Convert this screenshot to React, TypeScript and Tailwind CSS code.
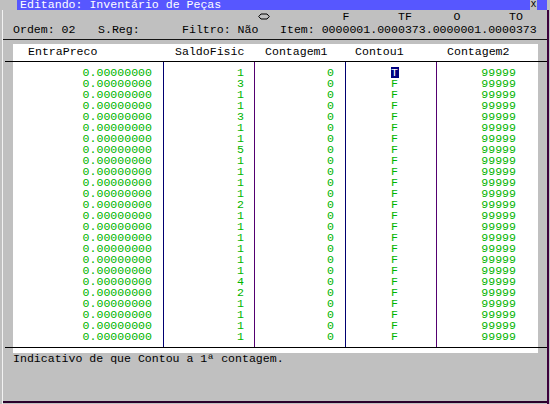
const saldo = [1, 3, 1, 1, 3, 1, 1, 5, 1, 1, 1, 1, 2, 1, 1, 1, 1, 1, 1, 4, 2, 1, 1, 1, 1];

const mono = "font-['Liberation_Mono',monospace] text-[11.57px] leading-[11px]";
const cell = "h-[11px] whitespace-pre";

function Column({ className, children }: { className: string; children: React.ReactNode }) {
  return <div className={`py-[5px] text-[#00b400] ${className}`}>{children}</div>;
}

export default function App() {
  return (
    <div className={`flex h-[404px] w-[550px] flex-col overflow-hidden bg-[#c0c0c0] text-black ${mono}`}>
      {/* title bar */}
      <div className="flex h-[10px] shrink-0">
        <div className="w-[17px]" />
        <div className="flex-1 overflow-hidden bg-[#5757ff] pl-[3px] text-white leading-[10px] whitespace-pre">Editando: Inventário de Peças</div>
        <div className="flex w-[7px] items-center justify-center text-[10px] leading-[10px]">x</div>
        <div className="w-[10px] bg-[#5757ff]" />
        <div className="w-[3px]" />
      </div>

      <div className="ml-[2px] mr-px flex flex-1 flex-col border-l border-r-2 border-l-[#f2f2f2] border-r-[#3c003c]">
        {/* F / TF / O / TO labels */}
        <div className="flex h-[13px] shrink-0 items-center">
          <div className="w-[255px]" />
          <svg width="12" height="7" viewBox="0 0 12 7" className="shrink-0">
            <path d="M0.7 3.5 L3 1 H9 L11.3 3.5 L9 6 H3 Z" fill="none" stroke="#000" strokeWidth="1" />
          </svg>
          <div className="w-[10px]" />
          <span className="whitespace-pre">{"         F       TF      O       TO"}</span>
        </div>

        {/* Ordem / Item */}
        <div className="flex h-[12px] shrink-0 items-center whitespace-pre">
          <span className="ml-[10px] w-[85px]">Ordem: 02</span>
          <span className="w-[84px]">S.Reg:</span>
          <span className="w-[98px]">Filtro: Não</span>
          <span>Item: 0000001.0000373.0000001.0000373</span>
        </div>

        <div className="h-[4px] shrink-0" />
        <div className="h-px shrink-0 bg-[#141414]" />
        <div className="h-[4px] shrink-0" />

        {/* table header */}
        <div className="ml-[10px] grid h-[17px] w-[525px] shrink-0 grid-cols-[150px_91px_91px_91px_102px] bg-white pt-[2px]">
          <span className="pl-[15px]">EntraPreco</span>
          <span className="pl-[12px]">SaldoFisic</span>
          <span className="pl-[11px]">Contagem1</span>
          <span className="pl-[10px]">Contou1</span>
          <span className="pl-[11px]">Contagem2</span>
        </div>
        <div className="ml-[2px] h-px shrink-0 bg-black" />

        {/* table body */}
        <div className="ml-[10px] grid w-[525px] shrink-0 grid-cols-[150px_91px_91px_91px_102px] bg-white">
          <Column className="pr-[11px] text-right">
            {saldo.map((_, i) => <div key={i} className={cell}>0.00000000</div>)}
          </Column>
          <Column className="border-l border-[#000070] pr-[10px] text-right">
            {saldo.map((s, i) => <div key={i} className={cell}>{s}</div>)}
          </Column>
          <Column className="border-l border-[#540070] pr-[11px] text-right">
            {saldo.map((_, i) => <div key={i} className={cell}>0</div>)}
          </Column>
          <Column className="border-l border-[#000070] pl-[45px]">
            {saldo.map((_, i) =>
              i === 0 ? (
                <div key={i} className={cell}>
                  <span className="-ml-[0.5px] inline-block w-[8px] bg-[#000080] text-center text-white">T</span>
                </div>
              ) : (
                <div key={i} className={cell}>F</div>
              )
            )}
          </Column>
          <Column className="border-l border-[#540070] pr-[22px] text-right">
            {saldo.map((_, i) => <div key={i} className={cell}>99999</div>)}
          </Column>
        </div>
        <div className="ml-[2px] h-px shrink-0 bg-black" />
        <div className="ml-[10px] h-[5px] w-[525px] shrink-0 bg-white" />

        {/* status line */}
        <div className="ml-[10px] h-[11px] shrink-0 whitespace-pre">Indicativo de que Contou a 1ª contagem.</div>

        <div className="flex-1" />
        <div className="h-[2px] shrink-0 bg-[#2a002a]" />
        <div className="h-px shrink-0" />
      </div>
    </div>
  );
}
